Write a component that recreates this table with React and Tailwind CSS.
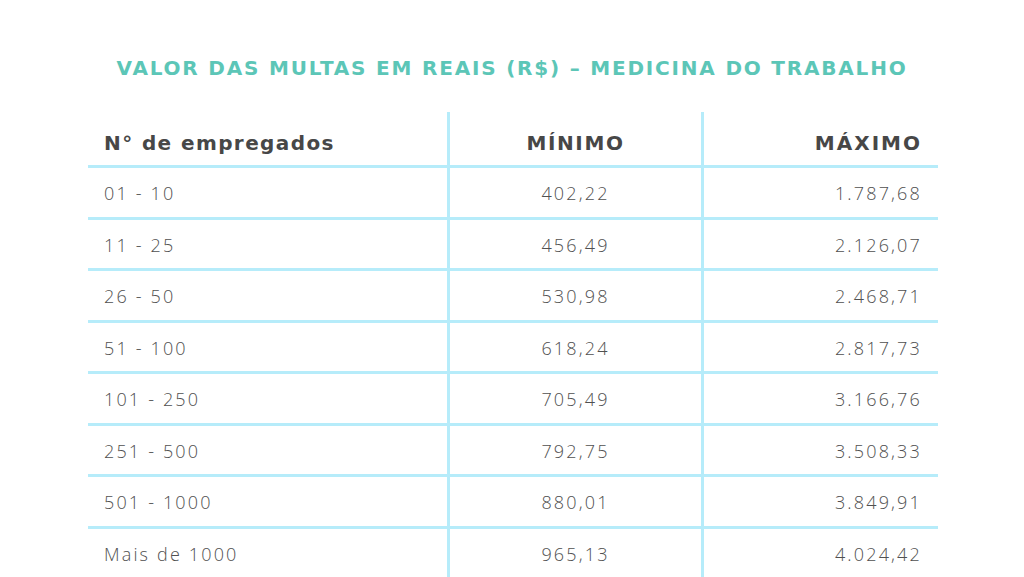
const rows = [
  ['01 - 10', '402,22', '1.787,68'],
  ['11 - 25', '456,49', '2.126,07'],
  ['26 - 50', '530,98', '2.468,71'],
  ['51 - 100', '618,24', '2.817,73'],
  ['101 - 250', '705,49', '3.166,76'],
  ['251 - 500', '792,75', '3.508,33'],
  ['501 - 1000', '880,01', '3.849,91'],
  ['Mais de 1000', '965,13', '4.024,42'],
];

const App = () => {
  return (
    <div className="w-[1024px] h-[577px] overflow-hidden bg-white font-['Open_Sans',sans-serif]">
      <h1 className="pt-[55px] text-center font-['DejaVu_Sans',sans-serif] text-[20px] leading-[26px] font-bold tracking-[0.09em] text-[#5cc6b7]">
        VALOR DAS MULTAS EM REAIS (R$) – MEDICINA DO TRABALHO
      </h1>

      <div className="ml-[88px] mt-[31px] w-[850px] grid grid-cols-[359px_254px_237px]">
        {/* header */}
        <div className="h-[56px] border-b-[3px] border-[#b6ecfa] pl-4 pt-2 flex items-center font-['DejaVu_Sans',sans-serif] text-[20px] font-bold tracking-[0.07em] text-[#474747]">
          N° de empregados
        </div>
        <div className="h-[56px] border-b-[3px] border-l-[3px] border-[#b6ecfa] pt-2 flex items-center justify-center font-['DejaVu_Sans',sans-serif] text-[20px] font-bold tracking-[0.08em] text-[#474747]">
          MÍNIMO
        </div>
        <div className="h-[56px] border-b-[3px] border-l-[3px] border-[#b6ecfa] pr-4 pt-2 flex items-center justify-end font-['DejaVu_Sans',sans-serif] text-[20px] font-bold tracking-[0.1em] text-[#474747]">
          MÁXIMO
        </div>

        {rows.map((r, i) => (
          <div key={i} className="contents">
            <div className="h-[51.5px] border-b-[3px] border-[#b6ecfa] pl-4 pt-[3px] flex items-center text-[18px] font-light tracking-[0.12em] text-[#505050]">
              {r[0]}
            </div>
            <div className="h-[51.5px] border-b-[3px] border-l-[3px] border-[#b6ecfa] pt-[3px] flex items-center justify-center text-[18px] font-light tracking-[0.12em] text-[#505050]">
              {r[1]}
            </div>
            <div className="h-[51.5px] border-b-[3px] border-l-[3px] border-[#b6ecfa] pr-4 pt-[3px] flex items-center justify-end text-[18px] font-light tracking-[0.12em] text-[#505050]">
              {r[2]}
            </div>
          </div>
        ))}
      </div>
    </div>
  );
};

export default App;
